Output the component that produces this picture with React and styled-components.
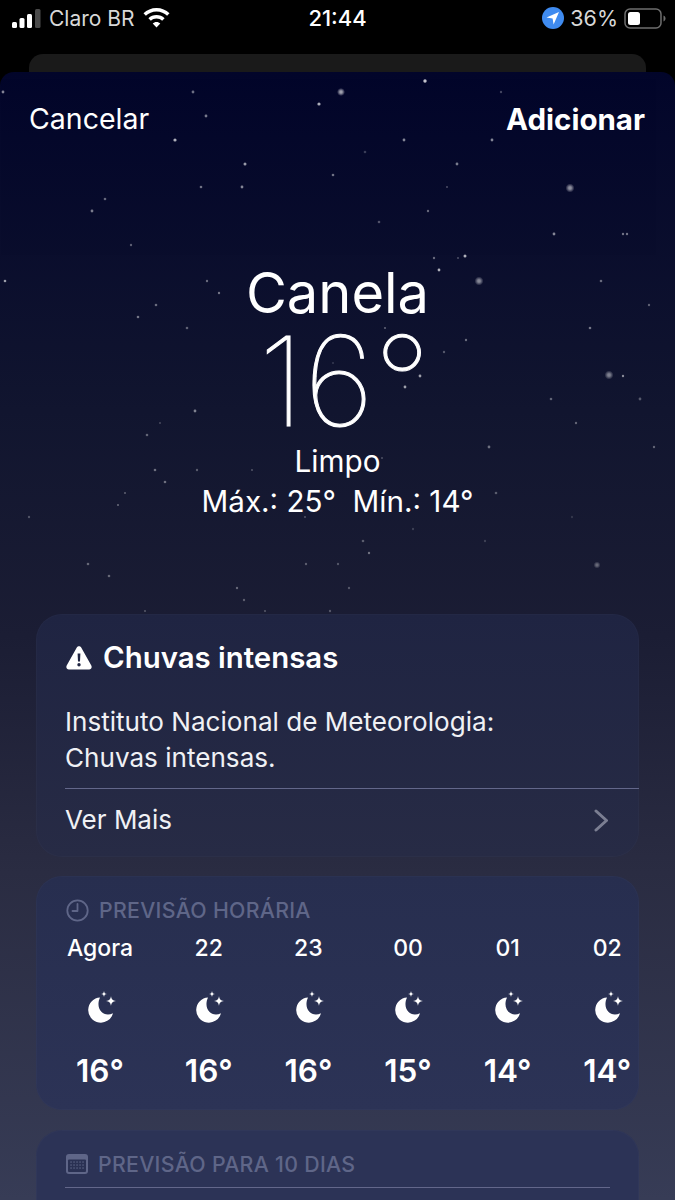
import React from 'react';
import styled, { createGlobalStyle } from 'styled-components';

const GlobalStyle = createGlobalStyle`
  html, body { margin: 0; padding: 0; background: #000; }
  body { font-family: Inter, "Liberation Sans", sans-serif; color: #fff; }
`;

const Page = styled.div`
  width: 675px;
  height: 1200px;
  overflow: hidden;
  background: #000;
`;

const StatusBar = styled.div`
  height: 36px;
  padding: 0 9px 0 12px;
  box-sizing: border-box;
  display: grid;
  grid-template-columns: 1fr auto 1fr;
  align-items: center;
`;

const StatusSide = styled.div`
  display: flex;
  align-items: center;
  gap: ${p => p.gap || 8}px;
  justify-content: ${p => (p.right ? 'flex-end' : 'flex-start')};
`;

const StatusText = styled.span`
  font-size: ${p => p.size || 21}px;
  color: #d8d8d8;
`;

const Clock = styled.span`
  font-size: 22px;
  font-weight: 500;
  color: #fff;
  margin-right: 3px;
`;

const BackSheet = styled.div`
  height: 18px;
  margin: 18px 29px 0;
  background: #1a1a1a;
  border-radius: 14px 14px 0 0;
`;

const Sheet = styled.div`
  position: relative;
  height: 1128px;
  overflow: hidden;
  border-radius: 14px 14px 0 0;
  background: linear-gradient(180deg, #02052a 0%, #11152f 30%, #1b1d34 50%, #2a2c42 71%, #373c56 100%);
`;

const StarField = styled.svg`
  position: absolute;
  left: 0;
  top: 0;
  opacity: 0.85;
`;

const Content = styled.div`
  position: relative;
  display: flex;
  flex-direction: column;
`;

const NavRow = styled.div`
  display: flex;
  justify-content: space-between;
  padding: 29px 30px 0 29px;
`;

const NavButton = styled.span`
  font-size: ${p => (p.strong ? 29.5 : 28.5)}px;
  line-height: 36px;
  font-weight: ${p => (p.strong ? 700 : 400)};
`;

const Hero = styled.div`
  margin-top: 126px;
  display: flex;
  flex-direction: column;
  align-items: center;
`;

const City = styled.div`
  font-size: 56px;
  line-height: 60px;
  font-weight: 400;
`;

const BigTemp = styled.div`
  font-size: 124px;
  line-height: 116px;
  font-weight: 100;
  -webkit-text-stroke: 1px #fff;
  margin-left: 14px;
`;

const Condition = styled.div`
  font-size: 29.7px;
  line-height: 36px;
  margin-top: 4px;
`;

const HighLow = styled.div`
  font-size: 29.6px;
  line-height: 36px;
  margin-top: 4px;
  white-space: pre;
`;

const Card = styled.div`
  margin: ${p => p.top}px 36px 0;
  box-sizing: border-box;
  height: ${p => p.h}px;
  border-radius: 26px;
  background: ${p => p.bg};
  box-shadow: inset 0 0 0 1px rgba(255, 255, 255, 0.02);
  overflow: hidden;
`;

const AlertHead = styled.div`
  display: flex;
  align-items: center;
  gap: 11px;
  padding: 26px 0 0 30px;
  font-size: 29.4px;
  line-height: 36px;
  font-weight: 600;
`;

const AlertBody = styled.div`
  padding: 28px 29px 0;
  font-size: 26.1px;
  line-height: 36px;
  color: #f0f1f5;
`;

const Rule = styled.div`
  height: 1px;
  background: #63678a;
  margin: ${p => p.top || 0}px ${p => p.right || 0}px 0 29px;
`;

const MoreRow = styled.div`
  display: flex;
  align-items: center;
  justify-content: space-between;
  padding: 13px 30px 0 29px;
  font-size: 26px;
  line-height: 36px;
  color: #f0f1f5;
`;

const SectionHead = styled.div`
  display: flex;
  align-items: center;
  gap: 10px;
  padding: 20px 0 0 30px;
  font-size: 21.3px;
  line-height: 28px;
  font-weight: 500;
  letter-spacing: 0.3px;
  color: #5f6688;
`;

const HourRow = styled.div`
  display: flex;
  padding: 10px 0 0 5px;
`;

const HourCol = styled.div`
  flex: 0 0 ${p => (p.first ? 118 : 99.6)}px;
  display: flex;
  flex-direction: column;
  align-items: center;
`;

const HourLabel = styled.div`
  font-size: 23px;
  line-height: 28px;
  font-weight: 500;
`;

const IconSlot = styled.div`
  height: 31px;
  margin: 29px 0 0 4px;
  display: flex;
`;

const HourTemp = styled.div`
  font-size: 31.5px;
  line-height: 36px;
  font-weight: 600;
  margin-top: 31px;
`;

// x, y, radius, opacity, in page pixels
const stars = [
  [3, 92, 1.4, 0.6], [193, 92, 1.4, 0.5], [206, 116, 1.4, 0.55], [175, 140, 1.6, 0.8], [319, 104, 1.6, 0.8],
  [341, 92, 4, 0.8], [425, 81, 1.7, 0.9], [501, 92, 1.2, 0.3], [404, 140, 1.4, 0.6], [492, 140, 1.4, 0.6],
  [245, 164, 1.5, 0.7], [333, 175, 1.3, 0.5], [201, 187, 1.3, 0.5], [242, 187, 1.4, 0.6], [105, 199, 1.3, 0.45],
  [92, 211, 1.4, 0.55], [131, 245, 1.2, 0.4], [5, 281, 1.3, 0.7], [207, 281, 1.2, 0.45], [219, 293, 1.2, 0.5],
  [156, 305, 1.3, 0.45], [138, 317, 1.3, 0.5], [187, 328, 1.3, 0.4], [316, 376, 1.2, 0.3], [333, 363, 1, 0.2],
  [365, 152, 1.3, 0.25], [457, 164, 1.4, 0.55], [447, 187, 1.1, 0.3], [570, 188, 4.5, 0.7], [428, 211, 1.2, 0.45],
  [379, 222, 1.3, 0.35], [554, 234, 1.4, 0.6], [623, 234, 1.2, 0.5], [627, 234, 1.2, 0.5], [434, 258, 1.2, 0.45],
  [458, 258, 1.1, 0.3], [465, 256, 1.5, 0.8], [439, 270, 1.4, 0.8], [479, 281, 4.5, 0.65], [601, 281, 1.3, 0.45],
  [649, 305, 1.2, 0.4], [590, 328, 1.3, 0.5], [385, 328, 1.1, 0.4], [466, 340, 1.2, 0.45], [444, 352, 1.2, 0.35],
  [420, 376, 1.4, 0.7], [609, 375, 4.5, 0.6], [623, 376, 1.2, 0.6], [195, 411, 1.4, 0.55], [160, 423, 1.1, 0.25],
  [147, 435, 1.3, 0.4], [155, 470, 1.3, 0.45], [197, 470, 1.2, 0.35], [252, 470, 1.1, 0.3], [165, 482, 1.3, 0.45],
  [125, 493, 1.1, 0.35], [118, 505, 1.1, 0.4], [29, 517, 1.2, 0.3], [305, 517, 1.1, 0.3], [88, 564, 1.3, 0.4],
  [306, 564, 1.2, 0.35], [338, 564, 1.2, 0.3], [109, 576, 1.3, 0.4], [237, 588, 1.2, 0.4], [244, 600, 1.2, 0.35],
  [145, 611, 1.1, 0.3], [265, 611, 1.1, 0.3], [330, 611, 1.2, 0.3], [405, 387, 1.4, 0.7], [551, 399, 1.3, 0.4],
  [640, 399, 1.4, 0.35], [576, 423, 1.2, 0.4], [489, 447, 1.4, 0.45], [654, 447, 1.2, 0.4], [382, 458, 1, 0.3],
  [496, 493, 1.3, 0.35], [572, 517, 1.2, 0.15], [413, 529, 1.2, 0.2], [363, 541, 1.3, 0.35], [485, 541, 1.2, 0.2],
  [369, 553, 1.2, 0.45], [597, 565, 3.5, 0.45], [349, 588, 1.2, 0.3],
];

const hours = [
  { label: 'Agora', temp: '16°' },
  { label: '22', temp: '16°' },
  { label: '23', temp: '16°' },
  { label: '00', temp: '15°' },
  { label: '01', temp: '14°' },
  { label: '02', temp: '14°' },
];

const Signal = () => (
  <svg width="29" height="19" viewBox="0 0 29 19">
    <rect x="0" y="13" width="5" height="6" rx="1.5" fill="#fff" />
    <rect x="7.5" y="9" width="5" height="10" rx="1.5" fill="#fff" />
    <rect x="15" y="5" width="5" height="14" rx="1.5" fill="#fff" />
    <rect x="23" y="0" width="5.5" height="19" rx="1.5" fill="#4a4a4a" />
  </svg>
);

const Wifi = () => (
  <svg width="27" height="20" viewBox="0 0 27 20" fill="#fff">
    <path d="M13.5 0C8.4 0 3.9 2 .5 5.2l2.4 2.6C5.6 5.2 9.4 3.6 13.5 3.6s7.9 1.6 10.6 4.2l2.4-2.6C23.1 2 18.6 0 13.5 0z" />
    <path d="M13.5 7c-3.1 0-6 1.2-8.1 3.2l2.5 2.6c1.5-1.4 3.5-2.2 5.6-2.2s4.1.8 5.6 2.2l2.5-2.6C19.5 8.2 16.6 7 13.5 7z" />
    <path d="M13.5 14c-1.5 0-2.8.6-3.8 1.5l3.8 4.1 3.8-4.1c-1-.9-2.3-1.5-3.8-1.5z" />
  </svg>
);

const LocationDot = () => (
  <svg width="22" height="22" viewBox="0 0 22 22">
    <circle cx="11" cy="11" r="11" fill="#3f8bf0" />
    <path d="M17 5 L4.5 10.4 L10.6 11.4 L11.6 17.5 Z" fill="#fff" />
  </svg>
);

const Battery = () => (
  <svg width="42" height="21" viewBox="0 0 42 21">
    <rect x="1" y="1" width="36" height="19" rx="5" fill="none" stroke="#6e6e6e" strokeWidth="1.5" />
    <rect x="4" y="4" width="12" height="13" rx="2.5" fill="#fff" />
    <path d="M39.5 7.5c1.2.4 2 1.6 2 3s-.8 2.6-2 3z" fill="#6e6e6e" />
  </svg>
);

const WarningIcon = () => (
  <svg width="26" height="24" viewBox="0 0 26 24">
    <path
      fillRule="evenodd"
      fill="#fff"
      d="M10.8 1.6c1-1.7 3.4-1.7 4.4 0l10.1 18c1 1.8-.2 3.9-2.2 3.9H2.9c-2 0-3.2-2.1-2.2-3.9zM11.6 7.5l.4 8h2l.4-8zM13 17a1.7 1.7 0 1 0 0 3.4A1.7 1.7 0 0 0 13 17z"
    />
  </svg>
);

const ClockIcon = () => (
  <svg width="23" height="23" viewBox="0 0 23 23" fill="none" stroke="#5f6688">
    <circle cx="11.5" cy="11.5" r="10.2" strokeWidth="1.8" />
    <path d="M11.5 5v7H6.5" strokeWidth="1.8" strokeLinecap="round" strokeLinejoin="round" />
  </svg>
);

const CalendarIcon = () => (
  <svg width="22" height="20" viewBox="0 0 22 20">
    <rect width="22" height="20" rx="3" fill="#5f6688" />
    <rect x="2" y="5.5" width="18" height="12.5" rx="1" fill="#2a3153" />
    {[8, 11, 14].map(y => [5, 8, 11, 14, 17].map(x => (
      <rect key={`${x}-${y}`} x={x - 0.6} y={y - 0.6} width="1.3" height="1.3" fill="#5f6688" />
    )))}
  </svg>
);

const Chevron = () => (
  <svg width="15" height="23" viewBox="0 0 15 23" fill="none">
    <path d="M2 2l10.5 9.5L2 21" stroke="#7b7e92" strokeWidth="3" strokeLinecap="round" strokeLinejoin="round" />
  </svg>
);

const MoonStars = () => (
  <svg width="31" height="31" viewBox="0 0 31 31" fill="#fff" overflow="visible">
    <path d="M13 6.5A12.6 12.6 0 1 0 26 22.3C16 27 8 17 13 6.5z" />
    <path d="M17 0c.3 2 .9 2.7 3 3-2.1.3-2.7 1-3 3-.3-2-.9-2.7-3-3 2.1-.3 2.7-1 3-3z" />
    <path d="M24 5c.5 3.3 1.5 4.5 5 5-3.5.5-4.5 1.7-5 5-.5-3.3-1.5-4.5-5-5 3.5-.5 4.5-1.7 5-5z" />
  </svg>
);

const App = () => (
  <Page>
    <GlobalStyle />
    <StatusBar>
      <StatusSide>
        <Signal />
        <StatusText>Claro BR</StatusText>
        <Wifi />
      </StatusSide>
      <Clock>21:44</Clock>
      <StatusSide right gap={6}>
        <LocationDot />
        <StatusText size={21.5}>36%</StatusText>
        <Battery />
      </StatusSide>
    </StatusBar>
    <BackSheet />
    <Sheet>
      <StarField width="675" height="1128" viewBox="0 72 675 1128">
        <defs>
          <radialGradient id="glow">
            <stop offset="0%" stopColor="#fff" />
            <stop offset="35%" stopColor="#fff" stopOpacity="0.8" />
            <stop offset="100%" stopColor="#fff" stopOpacity="0" />
          </radialGradient>
        </defs>
        {stars.map(([x, y, r, o]) => (
          <circle key={`${x}-${y}`} cx={x} cy={y} r={r} fill={r > 3 ? 'url(#glow)' : '#fff'} opacity={o} />
        ))}
      </StarField>
      <Content>
        <NavRow>
          <NavButton>Cancelar</NavButton>
          <NavButton strong>Adicionar</NavButton>
        </NavRow>
        <Hero>
          <City>Canela</City>
          <BigTemp>16°</BigTemp>
          <Condition>Limpo</Condition>
          <HighLow>Máx.: 25°  Mín.: 14°</HighLow>
        </Hero>
        <Card top={95} h={243} bg="linear-gradient(180deg, #1f2442, #272b45)">
          <AlertHead>
            <WarningIcon />
            Chuvas intensas
          </AlertHead>
          <AlertBody>
            Instituto Nacional de Meteorologia:
            <br />
            Chuvas intensas.
          </AlertBody>
          <Rule top={12} />
          <MoreRow>
            Ver Mais
            <Chevron />
          </MoreRow>
        </Card>
        <Card top={19} h={234} bg="linear-gradient(180deg, #272e4f, #2c3356)">
          <SectionHead>
            <ClockIcon />
            PREVISÃO HORÁRIA
          </SectionHead>
          <HourRow>
            {hours.map((h, i) => (
              <HourCol key={h.label} first={i === 0}>
                <HourLabel>{h.label}</HourLabel>
                <IconSlot><MoonStars /></IconSlot>
                <HourTemp>{h.temp}</HourTemp>
              </HourCol>
            ))}
          </HourRow>
        </Card>
        <Card top={20} h={120} bg="#2c3356">
          <SectionHead>
            <CalendarIcon />
            PREVISÃO PARA 10 DIAS
          </SectionHead>
          <Rule top={9} right={29} />
        </Card>
      </Content>
    </Sheet>
  </Page>
);

export default App;
